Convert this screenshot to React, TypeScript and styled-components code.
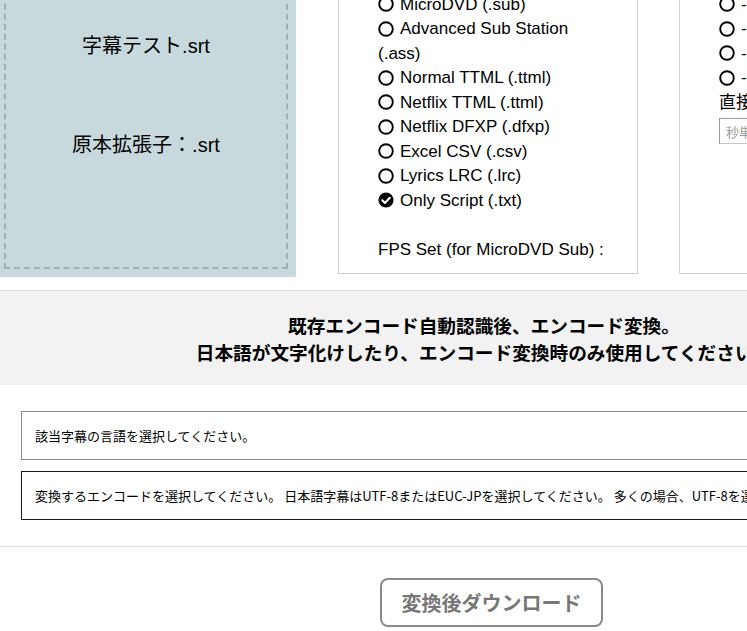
import React from "react";
import styled, { createGlobalStyle } from "styled-components";

const Global = createGlobalStyle`
  html, body {
    margin: 0;
    padding: 0;
    overflow: hidden;
    background: #ffffff;
  }
  body {
    font-family: "Liberation Sans", "Noto Sans CJK JP", Arial, sans-serif;
    color: #000;
  }
`;

const Page = styled.div`
  width: 968px;
`;

const TopRow = styled.div`
  display: flex;
  align-items: flex-start;
  gap: 42px;
  margin-top: -40px;
`;

const FileBox = styled.div`
  width: 296px;
  height: 317px;
  box-sizing: border-box;
  background: #c8d9de;
  padding: 4px 8px 8px 4px;
  flex-shrink: 0;
`;

const DashedArea = styled.div`
  height: 100%;
  box-sizing: border-box;
  border: 2px dashed #9bb2b6;
  display: flex;
  flex-direction: column;
  align-items: center;
  padding-top: 66px;
`;

const FileLine = styled.div<{ $gap?: number }>`
  font-size: 20px;
  line-height: 28px;
  margin-top: ${(p) => p.$gap ?? 0}px;
  font-family: "Liberation Sans", "Noto Sans CJK JP", sans-serif;
`;

const PanelGroup = styled.div`
  display: flex;
  align-items: stretch;
  gap: 41px;
`;

const Panel = styled.div`
  width: 300px;
  box-sizing: border-box;
  border: 1px solid #d2d2d2;
  padding: 7px 31px 11px 39px;
  font-size: 17px;
  line-height: 24.5px;
  flex-shrink: 0;
  white-space: normal;
`;

const WidePanel = styled(Panel)`
  width: 320px;
  padding-right: 0;
`;

const Option = styled.div`
  display: block;
`;

const Radio = styled.svg`
  display: inline-block;
  width: 16px;
  height: 16px;
  margin-right: 6px;
  vertical-align: -2.5px;
`;

const Note = styled.div`
  margin-top: 24.5px;
`;

const Label = styled.div`
  font-family: "Liberation Sans", "Noto Sans CJK JP", sans-serif;
`;

const SecInput = styled.input`
  display: block;
  margin-top: 3px;
  width: 200px;
  height: 26px;
  box-sizing: border-box;
  border: 1px solid #c4c4c4;
  border-left-color: #9a9a9a;
  border-top-color: #9a9a9a;
  padding: 0 6px;
  font-size: 13px;
  font-family: "Noto Sans CJK JP", sans-serif;
  &::placeholder {
    color: #9a9a9a;
  }
`;

const Band = styled.div`
  margin-top: 13px;
  border-top: 1px solid #dcdcdc;
  background: #f2f2f2;
  padding: 20px 0;
  text-align: center;
  font-family: "Noto Sans CJK JP", sans-serif;
  font-weight: 700;
  font-size: 18.66px;
  line-height: 27px;
  white-space: nowrap;
`;

const SelectArea = styled.div`
  margin: 26px 21px 0;
  display: flex;
  flex-direction: column;
  gap: 11px;
`;

const SelectBox = styled.div<{ $dark?: boolean }>`
  height: 49px;
  box-sizing: border-box;
  border: 1px solid ${(p) => (p.$dark ? "#1a1a1a" : "#8a8a8a")};
  display: flex;
  align-items: center;
  padding-left: 13px;
  font-family: "Noto Sans CJK JP", sans-serif;
  font-size: 13px;
  white-space: nowrap;
  overflow: hidden;
`;

const Rule = styled.hr`
  margin: 26px 0 0;
  border: 0;
  border-top: 1px solid #dcdcdc;
  width: 100%;
`;

const ButtonRow = styled.div`
  display: flex;
  justify-content: center;
  padding-top: 31px;
  padding-left: 15px;
`;

const DownloadButton = styled.button`
  width: 223px;
  height: 49px;
  box-sizing: border-box;
  border: 2px solid #8a8a8a;
  border-radius: 8px;
  background: #fff;
  color: #777;
  font-family: "Noto Sans CJK JP", sans-serif;
  font-weight: 700;
  font-size: 20px;
  cursor: pointer;
`;

const formats: { label: string; checked?: boolean }[] = [
  { label: "WebVTT (.vtt)" },
  { label: "MicroDVD (.sub)" },
  { label: "Advanced Sub Station (.ass)" },
  { label: "Normal TTML (.ttml)" },
  { label: "Netflix TTML (.ttml)" },
  { label: "Netflix DFXP (.dfxp)" },
  { label: "Excel CSV (.csv)" },
  { label: "Lyrics LRC (.lrc)" },
  { label: "Only Script (.txt)", checked: true },
];

const shifts = ["- 3秒 遅く", "- 2秒 遅く", "- 1秒 遅く", "- 0.5秒 遅く", "- 0.1秒 遅く"];

function RadioOption({ label, checked }: { label: string; checked?: boolean }) {
  return (
    <Option>
      <Radio viewBox="0 0 16 16">
        {checked ? (
          <>
            <circle cx="8" cy="8" r="7.6" fill="#000" />
            <path d="M4.3 8.3 L6.9 10.9 L11.8 5.8" fill="none" stroke="#fff" strokeWidth="2.1" strokeLinecap="round" strokeLinejoin="round" />
          </>
        ) : (
          <circle cx="8" cy="8" r="6.8" fill="none" stroke="#000" strokeWidth="1.9" />
        )}
      </Radio>
      {label}
    </Option>
  );
}

export default function App() {
  return (
    <>
      <Global />
      <Page>
        <TopRow>
          <FileBox>
            <DashedArea>
              <FileLine>字幕テスト.srt</FileLine>
              <FileLine $gap={71}>原本拡張子：.srt</FileLine>
            </DashedArea>
          </FileBox>
          <PanelGroup>
            <Panel>
              {formats.map((f) => (
                <RadioOption key={f.label} label={f.label} checked={f.checked} />
              ))}
              <Note>FPS Set (for MicroDVD Sub) :</Note>
            </Panel>
            <WidePanel>
              {shifts.map((s) => (
                <RadioOption key={s} label={s} />
              ))}
              <Label>直接入力（秒）</Label>
              <SecInput placeholder="秒単位で入力" />
            </WidePanel>
          </PanelGroup>
        </TopRow>
        <Band>
          <div>既存エンコード自動認識後、エンコード変換。</div>
          <div>日本語が文字化けしたり、エンコード変換時のみ使用してください。</div>
        </Band>
        <SelectArea>
          <SelectBox>該当字幕の言語を選択してください。</SelectBox>
          <SelectBox $dark>
            変換するエンコードを選択してください。 日本語字幕はUTF-8またはEUC-JPを選択してください。 多くの場合、UTF-8を選択すると正常に表示されます。
          </SelectBox>
        </SelectArea>
        <Rule />
        <ButtonRow>
          <DownloadButton>変換後ダウンロード</DownloadButton>
        </ButtonRow>
      </Page>
    </>
  );
}
